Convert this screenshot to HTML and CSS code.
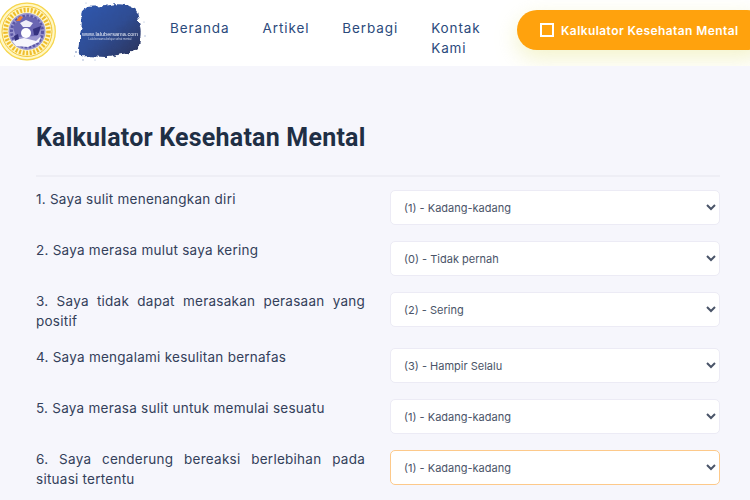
FILE: index.html
```html
<!DOCTYPE html>
<html lang="id">

<head>
    <meta charset="UTF-8">
    <meta name="viewport" content="width=device-width, initial-scale=1.0">
    <title>Kalkulator Kesehatan Mental</title>
    <link rel="stylesheet" href="styles.css">
</head>

<body>
    <header class="topbar">
        <svg class="logo-seal" viewBox="0 0 60 64" aria-hidden="true">
            <circle cx="27" cy="31.5" r="29" fill="#fff7c4" />
            <circle cx="27" cy="31.5" r="28.3" fill="none" stroke="#f6d54e" stroke-width="1.2" />
            <circle cx="27" cy="31.5" r="25" fill="none" stroke="#f2c534" stroke-width="1" />
            <circle cx="27" cy="31.5" r="21.5" fill="none" stroke="#efbd2c" stroke-width="4.5" stroke-dasharray="2 1.6" />
            <circle cx="27" cy="31.5" r="18.5" fill="#9a96d0" />
            <circle cx="27" cy="31.5" r="15.5" fill="none" stroke="#5a56a6" stroke-width="3" stroke-dasharray="2.5 1.5" />
            <path d="M13 27 L19 19 L27 16 L37 19 L42 27 L37 36 L16 37 Z" fill="#6a66b2" />
            <path d="M16 21 L20 16 L23 17 L20 21 Z" fill="#ee7a2e" />
            <path d="M20 23 L26 20 L33 23 L30 27 L23 27 Z" fill="#f0eff9" />
            <circle cx="26" cy="33" r="5" fill="#fff" />
            <path d="M12 41 L24 38 L36 41 L41 36 L39 42 L28 47 L16 46 Z" fill="#f6f6fc" />
            <path d="M14 36 L18 34 L19 39 L15 41 Z" fill="#35327f" />
            <path d="M33 29 L41 26 L38 35 L34 35 Z" fill="#35327f" />
        </svg>
        <svg class="logo-blob" viewBox="0 0 76 62" aria-hidden="true">
            <defs>
                <linearGradient id="blob-fill" x1="0" y1="0" x2="1" y2="1">
                    <stop offset="0" stop-color="#2f58b0" />
                    <stop offset="0.5" stop-color="#2f4d94" />
                    <stop offset="1" stop-color="#2b3258" />
                </linearGradient>
                <filter id="ragged" x="-10%" y="-10%" width="120%" height="120%" color-interpolation-filters="sRGB">
                    <feTurbulence type="fractalNoise" baseFrequency="0.22" numOctaves="2" seed="4" />
                    <feDisplacementMap in="SourceGraphic" scale="5" xChannelSelector="R" yChannelSelector="G" />
                </filter>
            </defs>
            <path d="M9 10 C15 5 24 7 33 6 C42 3 54 4 61 8 C66 12 65 19 67 26 C69 34 66 42 66 48 C60 54 49 53 42 56 C33 58 22 56 15 56 C8 57 5 56 6 50 C8 42 6 36 8 30 C10 23 7 16 9 10 Z" fill="url(#blob-fill)" filter="url(#ragged)" />
            <g fill="#9fb0d0">
                <circle cx="3" cy="52" r="1" />
                <circle cx="1.5" cy="56" r="0.6" />
                <circle cx="10" cy="60" r="0.8" />
                <circle cx="22" cy="60" r="0.6" />
                <circle cx="71" cy="22" r="0.6" />
                <circle cx="72" cy="36" r="0.7" />
                <circle cx="13" cy="3" r="0.6" />
            </g>
            <text x="37" y="35.5" class="logo-url" text-anchor="middle">www.lalubersama.com</text>
            <text x="37" y="40" class="logo-sub" text-anchor="middle">Lalu bersama belajar sehat mental</text>
        </svg>
        <nav class="menu">
            <a href="#">Beranda</a>
            <a href="#">Artikel</a>
            <a href="#">Berbagi</a>
            <a href="#" class="menu-wrap">Kontak Kami</a>
        </nav>
        <a href="#" class="cta"><span class="cta-box"></span>Kalkulator Kesehatan Mental</a>
    </header>

    <main class="content">
        <h1>Kalkulator Kesehatan Mental</h1>
        <hr>
        <form class="quiz">
            <label>1. Saya sulit menenangkan diri</label>
            <select>
                <option>(0) - Tidak pernah</option>
                <option selected>(1) - Kadang-kadang</option>
                <option>(2) - Sering</option>
                <option>(3) - Hampir Selalu</option>
            </select>

            <label>2. Saya merasa mulut saya kering</label>
            <select>
                <option selected>(0) - Tidak pernah</option>
                <option>(1) - Kadang-kadang</option>
                <option>(2) - Sering</option>
                <option>(3) - Hampir Selalu</option>
            </select>

            <label>3. Saya tidak dapat merasakan perasaan yang positif</label>
            <select>
                <option>(0) - Tidak pernah</option>
                <option>(1) - Kadang-kadang</option>
                <option selected>(2) - Sering</option>
                <option>(3) - Hampir Selalu</option>
            </select>

            <label>4. Saya mengalami kesulitan bernafas</label>
            <select>
                <option>(0) - Tidak pernah</option>
                <option>(1) - Kadang-kadang</option>
                <option>(2) - Sering</option>
                <option selected>(3) - Hampir Selalu</option>
            </select>

            <label>5. Saya merasa sulit untuk memulai sesuatu</label>
            <select>
                <option>(0) - Tidak pernah</option>
                <option selected>(1) - Kadang-kadang</option>
                <option>(2) - Sering</option>
                <option>(3) - Hampir Selalu</option>
            </select>

            <label>6. Saya cenderung bereaksi berlebihan pada situasi tertentu</label>
            <select class="focused">
                <option>(0) - Tidak pernah</option>
                <option selected>(1) - Kadang-kadang</option>
                <option>(2) - Sering</option>
                <option>(3) - Hampir Selalu</option>
            </select>
        </form>
    </main>
</body>

</html>
```

FILE: styles.css
```css
html {
    overflow: hidden;
}

body {
    height: 500px;
    margin: 0;
    overflow: hidden;
    background-color: #f6f6fc;
    font-family: 'Inter', 'Open Sans', Arial, sans-serif;
    color: #33405a;
}

.topbar {
    display: flex;
    align-items: flex-start;
    height: 66px;
    overflow: hidden;
    background-color: #fff;
}

.logo-seal {
    flex: none;
    width: 60px;
    height: 64px;
    filter: blur(0.5px);
}

.logo-blob {
    flex: none;
    width: 76px;
    height: 62px;
    margin-left: 13px;
    filter: blur(0.7px);
}

.logo-url {
    font-family: 'Liberation Sans', Arial, sans-serif;
    font-size: 5.6px;
    fill: #e8edf7;
}

.logo-sub {
    font-family: 'Liberation Sans', Arial, sans-serif;
    font-size: 2.8px;
    fill: #c9d3e8;
}

.menu {
    display: flex;
    gap: 33px;
    margin: 18px 0 0 21px;
}

.menu a {
    font-size: 13.5px;
    line-height: 20px;
    letter-spacing: 0.9px;
    color: #2b4a7c;
    text-decoration: none;
}

.menu .menu-wrap {
    width: 60px;
}

.cta {
    flex: none;
    display: flex;
    align-items: center;
    box-sizing: border-box;
    width: 250px;
    height: 40px;
    margin: 10px -17px 0 auto;
    padding-left: 23px;
    border-radius: 20px;
    background-color: #ffa20d;
    box-shadow: 0 8px 22px rgba(226, 226, 120, 0.4);
    font-size: 12px;
    font-weight: 600;
    letter-spacing: 0.42px;
    color: #fff;
    text-decoration: none;
    white-space: nowrap;
}

.cta-box {
    box-sizing: border-box;
    width: 14px;
    height: 14px;
    margin-right: 7px;
    border: 2px solid #fff;
}

.content {
    padding: 0 30px 0 36px;
}

h1 {
    margin: 0;
    padding-top: 56px;
    font-family: 'Roboto', Arial, sans-serif;
    font-size: 25px;
    line-height: 32px;
    font-weight: 700;
    letter-spacing: 0.22px;
    color: #1f2f45;
}

hr {
    height: 2px;
    margin: 21px 0 13px;
    border: 0;
    background-color: #eeeef5;
}

.quiz {
    display: grid;
    grid-template-columns: 329px 330px;
    column-gap: 25px;
    row-gap: 16.5px;
    align-items: start;
}

.quiz label {
    margin: -1px 0 0.5px;
    font-size: 13.5px;
    line-height: 20px;
    text-align: justify;
    letter-spacing: 0.25px;
    color: #33405a;
}

.quiz select {
    box-sizing: border-box;
    width: 330px;
    height: 34.5px;
    padding: 1px 9px 0;
    border: 1.5px solid #ecebf5;
    border-radius: 5px;
    background-color: #fff;
    font-family: inherit;
    font-size: 11px;
    color: #4a5468;
}

.quiz select.focused {
    border-color: #fdc98a;
}
```
